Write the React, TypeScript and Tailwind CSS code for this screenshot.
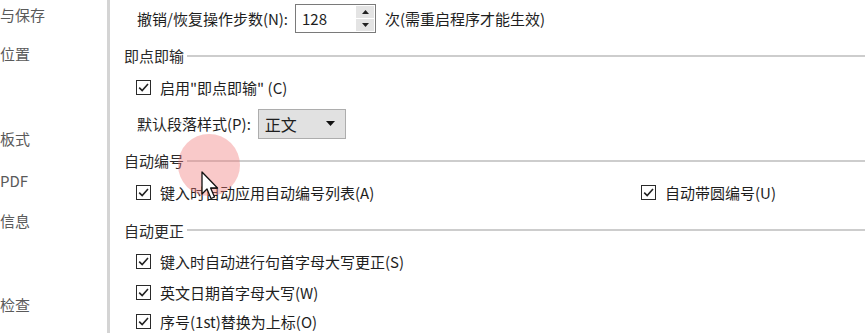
import React from "react";

const font = { fontFamily: '"Noto Sans CJK SC", "Noto Sans", sans-serif' };

function Check() {
  return (
    <span className="w-[15px] h-[15px] border border-[#2a2a2a] bg-white flex items-center justify-center shrink-0">
      <svg width="13" height="13" viewBox="0 0 13 13">
        <path d="M2.2 6.6 L5.2 9.6 L11 3" fill="none" stroke="#222" strokeWidth="1.6" />
      </svg>
    </span>
  );
}

function CheckRow({ label, className = "" }: { label: string; className?: string }) {
  return (
    <div className={`flex items-center gap-[9px] ${className}`}>
      <Check />
      <span>{label}</span>
    </div>
  );
}

function Heading({ label, mt }: { label: string; mt: string }) {
  return (
    <div className={`flex items-center h-[24px] pr-[3px] ${mt}`}>
      <div className="w-[14px] shrink-0" />
      <span className="shrink-0 text-[#2a2a2a]">{label}</span>
      <div className="flex-1 h-[2px] bg-[#cdcdcd] ml-[3px]" />
    </div>
  );
}

export default function App() {
  return (
    <div
      className="relative w-[868px] h-[333px] overflow-hidden bg-white flex text-[15px] leading-none text-[#1e1e1e]"
      style={font}
    >
      {/* sidebar */}
      <div className="w-[107px] shrink-0 flex flex-col text-[#5a5a5a]">
        <div className="h-[24px] mt-[2px] flex items-center">与保存</div>
        <div className="h-[24px] mt-[15px] flex items-center">位置</div>
        <div className="h-[24px] mt-[61px] flex items-center">板式</div>
        <div className="h-[24px] mt-[18px] flex items-center">PDF</div>
        <div className="h-[24px] mt-[16px] flex items-center">信息</div>
        <div className="h-[24px] mt-[60px] flex items-center">检查</div>
      </div>
      <div className="w-[3px] shrink-0 bg-[#d4d4d4]" />

      {/* content */}
      <div className="flex-1 flex flex-col">
        <div className="mt-[4px] h-[29px] flex items-center pl-[27px]">
          <span>撤销/恢复操作步数(N):</span>
          <div className="ml-[7px] w-[81px] h-[29px] border border-[#7a7a7a] bg-white flex items-center justify-between pl-[6px] pr-[1px]">
            <span>128</span>
            <div className="w-[18px] h-[25px] flex flex-col gap-px">
              <div className="flex-1 bg-[#e4e4e4] flex items-center justify-center">
                <svg width="7" height="4" viewBox="0 0 7 4"><path d="M0 4 L3.5 0 L7 4Z" fill="#222" /></svg>
              </div>
              <div className="flex-1 bg-[#e4e4e4] flex items-center justify-center">
                <svg width="7" height="4" viewBox="0 0 7 4"><path d="M0 0 L3.5 4 L7 0Z" fill="#222" /></svg>
              </div>
            </div>
          </div>
          <span className="ml-[9px]">次(需重启程序才能生效)</span>
        </div>

        <Heading label="即点即输" mt="mt-[11px]" />
        <div className="mt-[8px] h-[24px] flex items-center pl-[26px]">
          <CheckRow label={'启用"即点即输" (C)'} />
        </div>
        <div className="mt-[9px] h-[30px] flex items-center pl-[27px]">
          <span>默认段落样式(P):</span>
          <div className="ml-[7px] w-[88px] h-[30px] border border-[#adadad] bg-[#e1e1e1] flex items-center justify-between pl-[6px] pr-[10px]">
            <span className="text-[16px]">正文</span>
            <svg width="9" height="5" viewBox="0 0 9 5"><path d="M0 0 L4.5 5 L9 0Z" fill="#111" /></svg>
          </div>
        </div>

        <Heading label="自动编号" mt="mt-[10px]" />
        <div className="mt-[8px] h-[24px] flex items-center pl-[26px]">
          <CheckRow label="键入时自动应用自动编号列表(A)" className="w-[505px]" />
          <CheckRow label="自动带圆编号(U)" />
        </div>

        <Heading label="自动更正" mt="mt-[14px]" />
        <div className="mt-[7px] h-[24px] flex items-center pl-[26px]">
          <CheckRow label="键入时自动进行句首字母大写更正(S)" />
        </div>
        <div className="mt-[7px] h-[24px] flex items-center pl-[26px]">
          <CheckRow label="英文日期首字母大写(W)" />
        </div>
        <div className="mt-[5px] h-[24px] flex items-center pl-[26px]">
          <CheckRow label="序号(1st)替换为上标(O)" />
        </div>
      </div>

      {/* cursor highlight */}
      <div className="absolute left-[178px] top-[134px] w-[62px] h-[62px] rounded-full bg-[rgba(240,120,120,0.4)] pointer-events-none" />
      <svg className="absolute left-[201px] top-[171px]" width="18" height="30" viewBox="0 0 18 30">
        <path d="M1 1 L1 23 L6 18 L10 27.5 L13.5 26 L9.6 17 L16.5 17 Z" fill="#fff" stroke="#111" strokeWidth="1.3" strokeLinejoin="round" />
      </svg>
    </div>
  );
}
